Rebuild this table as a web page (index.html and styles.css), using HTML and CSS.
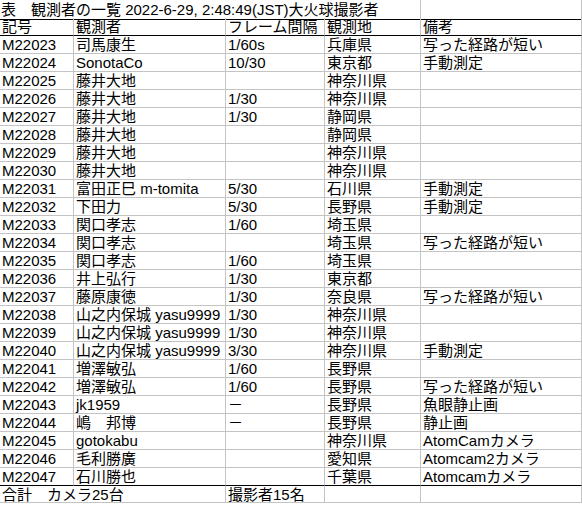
FILE: index.html
```html
<!DOCTYPE html>
<html lang="ja">
<head>
<meta charset="utf-8">
<title>観測者の一覧</title>
<link rel="stylesheet" href="styles.css">
</head>
<body>
<div class="sheet">
  <div class="c title span4">表　観測者の一覧 2022-6-29, 2:48:49(JST)大火球撮影者</div>
  <div class="c title"></div>

  <div class="c head">記号</div><div class="c head">観測者</div><div class="c head">フレーム間隔</div><div class="c head">観測地</div><div class="c head">備考</div>

  <div class="c">M22023</div><div class="c">司馬康生</div><div class="c">1/60s</div><div class="c">兵庫県</div><div class="c">写った経路が短い</div>
  <div class="c">M22024</div><div class="c">SonotaCo</div><div class="c">10/30</div><div class="c">東京都</div><div class="c">手動測定</div>
  <div class="c">M22025</div><div class="c">藤井大地</div><div class="c"></div><div class="c">神奈川県</div><div class="c"></div>
  <div class="c">M22026</div><div class="c">藤井大地</div><div class="c">1/30</div><div class="c">神奈川県</div><div class="c"></div>
  <div class="c">M22027</div><div class="c">藤井大地</div><div class="c">1/30</div><div class="c">静岡県</div><div class="c"></div>
  <div class="c">M22028</div><div class="c">藤井大地</div><div class="c"></div><div class="c">静岡県</div><div class="c"></div>
  <div class="c">M22029</div><div class="c">藤井大地</div><div class="c"></div><div class="c">神奈川県</div><div class="c"></div>
  <div class="c">M22030</div><div class="c">藤井大地</div><div class="c"></div><div class="c">神奈川県</div><div class="c"></div>
  <div class="c">M22031</div><div class="c">富田正巳 m-tomita</div><div class="c">5/30</div><div class="c">石川県</div><div class="c">手動測定</div>
  <div class="c">M22032</div><div class="c">下田力</div><div class="c">5/30</div><div class="c">長野県</div><div class="c">手動測定</div>
  <div class="c">M22033</div><div class="c">関口孝志</div><div class="c">1/60</div><div class="c">埼玉県</div><div class="c"></div>
  <div class="c">M22034</div><div class="c">関口孝志</div><div class="c"></div><div class="c">埼玉県</div><div class="c">写った経路が短い</div>
  <div class="c">M22035</div><div class="c">関口孝志</div><div class="c">1/60</div><div class="c">埼玉県</div><div class="c"></div>
  <div class="c">M22036</div><div class="c">井上弘行</div><div class="c">1/30</div><div class="c">東京都</div><div class="c"></div>
  <div class="c">M22037</div><div class="c">藤原康徳</div><div class="c">1/30</div><div class="c">奈良県</div><div class="c">写った経路が短い</div>
  <div class="c">M22038</div><div class="c">山之内保城 yasu9999</div><div class="c">1/30</div><div class="c">神奈川県</div><div class="c"></div>
  <div class="c">M22039</div><div class="c">山之内保城 yasu9999</div><div class="c">1/30</div><div class="c">神奈川県</div><div class="c"></div>
  <div class="c">M22040</div><div class="c">山之内保城 yasu9999</div><div class="c">3/30</div><div class="c">神奈川県</div><div class="c">手動測定</div>
  <div class="c">M22041</div><div class="c">増澤敏弘</div><div class="c">1/60</div><div class="c">長野県</div><div class="c"></div>
  <div class="c">M22042</div><div class="c">増澤敏弘</div><div class="c">1/60</div><div class="c">長野県</div><div class="c">写った経路が短い</div>
  <div class="c">M22043</div><div class="c">jk1959</div><div class="c">－</div><div class="c">長野県</div><div class="c">魚眼静止画</div>
  <div class="c">M22044</div><div class="c">嶋　邦博</div><div class="c">－</div><div class="c">長野県</div><div class="c">静止画</div>
  <div class="c">M22045</div><div class="c">gotokabu</div><div class="c"></div><div class="c">神奈川県</div><div class="c">AtomCamカメラ</div>
  <div class="c">M22046</div><div class="c">毛利勝廣</div><div class="c"></div><div class="c">愛知県</div><div class="c">Atomcam2カメラ</div>
  <div class="c last">M22047</div><div class="c last">石川勝也</div><div class="c last"></div><div class="c last">千葉県</div><div class="c last">Atomcamカメラ</div>

  <div class="c total span2">合計　カメラ25台</div><div class="c total">撮影者15名</div><div class="c total"></div><div class="c total"></div>
</div>
</body>
</html>
```

FILE: styles.css
```css
html, body {
  margin: 0;
  padding: 0;
  background: #ffffff;
}

body {
  font-family: "Liberation Sans", "Noto Sans CJK JP", sans-serif;
  font-size: 15px;
  color: #000000;
}

.sheet {
  display: grid;
  grid-template-columns: 74px 152px 99px 96px 161px;
  grid-auto-rows: 18px;
  width: 582px;
}

.c {
  box-sizing: border-box;
  height: 18px;
  padding: 1px 0 0 2px;
  line-height: 16px;
  white-space: nowrap;
  border-right: 1px solid #c4c4c4;
  border-bottom: 1px solid #c4c4c4;
}

.sheet > .title {
  height: 20px;
  padding-top: 2px;
  padding-left: 1px;
  border-bottom-color: #000000;
}

.span4 {
  grid-column: span 4;
}

.span2 {
  grid-column: span 2;
}

.head,
.last {
  border-bottom-color: #000000;
}

.total {
  height: 17px;
}
```
